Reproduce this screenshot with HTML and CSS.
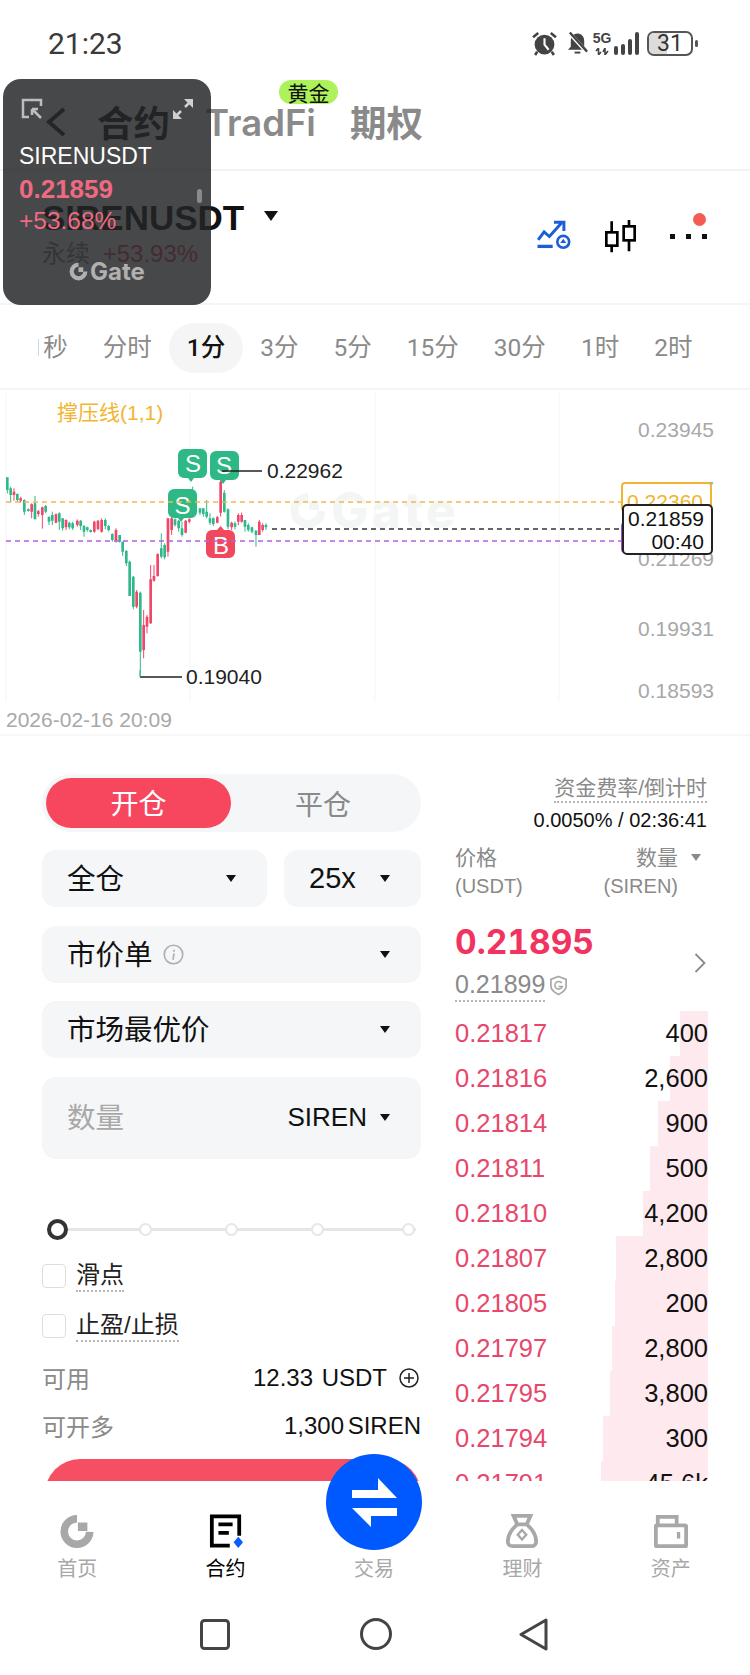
FILE: index.html
```html
<!DOCTYPE html>
<html lang="zh-CN">
  <head>
    <meta charset="UTF-8" />
    <meta name="viewport" content="width=device-width, initial-scale=1.0" />
    <title>SIRENUSDT 合约</title>
    <link rel="stylesheet" href="styles.css">
  </head>
  <body>
    <div class="page">
      <div class="statusbar">
        <span class="clock">21:23</span>
        <div class="status-icons">
          <svg class="ic-alarm" viewBox="0 0 24 24" width="25" height="25">
            <circle cx="12" cy="13" r="9.500" fill="#444" />
            <path d="M12 7v6l4 5" fill="none" stroke="#fff" stroke-width="2" />
            <path d="M1 6l5-4M23 6l-5-4M5 20l-2 3M19 20l2 3" fill="none" stroke="#444" stroke-width="2.500" />
          </svg>
          <svg class="ic-bell" viewBox="0 0 24 24" width="23" height="24">
            <path d="M12 2c-5 0-7 4-7 8v6l-3 3h20l-3-3v-6c0-4-2-8-7-8z" fill="#444" />
            <path d="M9 21h6v2H9z" fill="#444" />
            <path d="M3 1l19 21" stroke="#fff" stroke-width="4" />
            <path d="M4 1l18 20" stroke="#444" stroke-width="2.500" />
          </svg>
          <div class="net">
            <span class="net-label">5G</span>
            <svg viewBox="0 0 15 7" width="15" height="7">
              <path d="M3.500 0v7M10 0v7M1 3l2.500-3M6 4l-2.500 3M8 4l2-4M13 3l-3 4" fill="none" stroke="#444" stroke-width="1.600" />
            </svg>
          </div>
          <div class="signal">
            <i class="bar-a"></i><i class="bar-b"></i><i class="bar-c"></i><i class="bar-d"></i>
          </div>
          <div class="battery">
            <span class="battery-level"></span>
            <span class="battery-num">31</span>
          </div>
          <span class="battery-nub"></span>
        </div>
      </div>

      <div class="topnav">
        <svg class="back" viewBox="0 0 22 30" width="22" height="30">
          <path d="M19 2L4 15l15 13" fill="none" stroke="#2a2a2a" stroke-width="4" />
        </svg>
        <span class="topnav-item active">合约</span>
        <span class="topnav-item tradfi">TradFi<em class="gold">黄金</em></span>
        <span class="topnav-item">期权</span>
      </div>

      <div class="pair">
        <div class="pair-info">
          <div class="pair-name">SIRENUSDT <span class="caret caret-big"></span></div>
          <div class="pair-sub">永续 <span class="pair-change">+53.93%</span></div>
        </div>
        <div class="pair-tools">
          <svg viewBox="75 90 120 100" width="40" height="33">
            <path d="M84 150l18-24 16 14 36-40M132 97h30v26" fill="none" stroke="#1a5fd8" stroke-width="9" />
            <path d="M82 170h46" stroke="#1a5fd8" stroke-width="10" />
            <circle cx="160" cy="156" r="18" fill="none" stroke="#1a5fd8" stroke-width="8" />
            <path d="M160 147l9 13h-18z" fill="#1a5fd8" />
          </svg>
          <svg viewBox="280 85 105 105" width="35" height="35">
            <path d="M306 92v93M358 88v94" stroke="#000" stroke-width="8" />
            <rect x="290" y="125" width="33" height="40" fill="#fff" stroke="#000" stroke-width="8" />
            <rect x="342" y="107" width="33" height="42" fill="#fff" stroke="#000" stroke-width="8" />
          </svg>
          <div class="more">
            <i></i><i></i><i></i>
            <span class="more-dot"></span>
          </div>
        </div>
      </div>

      <div class="intervals">
        <span class="interval first">1秒</span>
        <span class="interval">分时</span>
        <span class="interval selected">1分</span>
        <span class="interval">3分</span>
        <span class="interval">5分</span>
        <span class="interval">15分</span>
        <span class="interval">30分</span>
        <span class="interval">1时</span>
        <span class="interval">2时</span>
      </div>

      <div class="chart">
        <div class="watermark">
          <svg viewBox="0 0 36 36" width="36" height="36">
            <path d="M18 5a13.500 13.500 0 1 0 13.500 14" fill="none" stroke="#f4f5f5" stroke-width="8" />
            <rect x="19" y="9" width="10" height="9" fill="#f4f5f5" />
          </svg>
          <span>Gate</span>
        </div>
        <svg class="chart-svg" viewBox="0 0 750 345" width="750" height="345">
          <path d="M6 3v309M190 3v309M375 3v309M559 3v309" stroke="#f5f5f5" stroke-width="1" />
          <g transform="translate(0 80) scale(0.3333)">
            <path fill="none" stroke="#2fb98a" stroke-width="3" d="M22 22V70M32 50V98M52 70V95M73 88V135M85 115V125M105 78V148M137 105V130M147 140V165M157 125V165M178 127V180M188 145V182M208 155V178M218 155V180M242 150V180M252 165V200M262 170V185M272 178V188M316 145V178M326 165V185M337 190V215M359 195V218M368 215V258M379 240V288M389 272V378M400 318V418M421 365V620M484 190V265M494 220V268M525 145V170M536 150V185M546 155V200M578 50V75M600 115V135M610 115V140M620 90V145M630 130V165M640 142V168M673 60V128M684 115V178M705 155V178M735 150V185M745 160V185M756 170V190M768 180V230M798 160V180" />
            <path fill="none" stroke="#2fb98a" stroke-width="8" d="M22 22V60M32 55V75M52 72V90M73 90V125M85 118V123M105 100V148M137 108V125M147 140V155M157 135V152M178 130V155M188 145V175M208 158V172M218 160V175M242 152V168M252 168V185M262 172V180M272 180V186M316 150V168M326 168V180M337 192V210M359 195V215M368 215V245M379 243V280M389 275V378M400 320V410M421 368V545M484 235V260M494 225V262M525 148V165M536 152V175M546 175V195M600 115V128M610 115V132M620 125V140M630 145V158M640 145V162M673 68V125M684 118V170M705 160V170M735 150V170M745 165V180M756 172V185M768 182V195M798 165V172" />
            <path fill="none" stroke="#f0466a" stroke-width="3" d="M42 55V92M62 80V98M95 100V145M115 120V140M127 110V176M168 130V160M198 148V180M232 148V170M283 152V188M294 150V180M305 145V188M348 175V218M410 360V415M431 420V565M441 435V490M452 285V462M462 285V335M473 250V320M504 145V260M515 120V195M557 150V190M568 145V160M652 138V160M662 30V140M695 155V180M715 130V165M725 128V158M778 150V195M788 160V185" />
            <path fill="none" stroke="#f0466a" stroke-width="8" d="M42 65V75M62 85V92M95 103V125M115 124V132M127 112V135M168 133V158M198 150V172M232 152V165M283 155V185M294 152V178M305 150V185M348 180V212M410 365V410M431 465V540M441 440V470M452 328V460M462 318V332M473 252V318M504 145V245M515 145V180M557 152V188M568 148V155M652 142V158M662 35V128M695 158V172M715 135V155M725 135V155M778 155V195M788 165V180" />
          </g>
          <g class="marker-sell">
            <path d="M184 59h17a6 6 0 0 1 6 6v17a6 6 0 0 1-6 6h-7l-3 4-3-4h-4a6 6 0 0 1-6-6v-17a6 6 0 0 1 6-6z" />
            <path d="M216 61h17a6 6 0 0 1 6 6v17a6 6 0 0 1-6 6h-7l-3 4-3-4h-4a6 6 0 0 1-6-6v-17a6 6 0 0 1 6-6z" />
            <path d="M174 99h17a6 6 0 0 1 6 6v17a6 6 0 0 1-6 6h-7l-3 4-3-4h-4a6 6 0 0 1-6-6v-17a6 6 0 0 1 6-6z" />
          </g>
          <text x="193" y="82" class="marker-text">S</text>
          <text x="224" y="84" class="marker-text">S</text>
          <text x="182.500" y="124" class="marker-text">S</text>
          <path class="marker-buy" d="M212 140h5l3.500-4 3.500 4h5a6 6 0 0 1 6 6v16a6 6 0 0 1-6 6h-17a6 6 0 0 1-6-6v-16a6 6 0 0 1 6-6z" />
          <text x="221" y="164" class="marker-text">B</text>
          <path d="M6 112H621" stroke="#f2b84a" stroke-width="1.700" stroke-dasharray="5 4" />
          <path d="M6 151H621" stroke="#b760e0" stroke-width="1.700" stroke-dasharray="5 4" />
          <path d="M272 139H622" stroke="#333" stroke-width="1.700" stroke-dasharray="5 4" />
          <path d="M222 81H262M140 287H182" stroke="#222" stroke-width="1.500" />
          <path d="M140 280V287" stroke="#2fb98a" stroke-width="1" />
        </svg>
        <span class="indicator">撑压线(1,1)</span>
        <span class="peak peak-high">0.22962</span>
        <span class="peak peak-low">0.19040</span>
        <span class="axis axis-a">0.23945</span>
        <span class="axis axis-b">0.22607</span>
        <span class="axis axis-c">0.21269</span>
        <span class="axis axis-d">0.19931</span>
        <span class="axis axis-e">0.18593</span>
        <span class="tag-yellow">0.22360</span>
        <span class="tag-purple"></span>
        <div class="tag-last">0.21859<br />00:40</div>
        <span class="chart-date">2026-02-16 20:09</span>
      </div>

      <div class="trade">
        <div class="form">
          <div class="switch">
            <span class="switch-on">开仓</span>
            <span class="switch-off">平仓</span>
          </div>
          <div class="form-row">
            <div class="field grow"><span class="cn">全仓</span><span class="caret"></span></div>
            <div class="field lever">25x<span class="caret"></span></div>
          </div>
          <div class="field">
            <span class="field-label"><span class="cn">市价单</span>
              <svg viewBox="0 0 20 20" width="21" height="21">
                <circle cx="10" cy="10" r="8.800" fill="none" stroke="#b0b0b0" stroke-width="1.600" />
                <path d="M10.500 5.500v1.800M10.500 9l-1 6" stroke="#b0b0b0" stroke-width="1.600" fill="none" />
              </svg>
            </span>
            <span class="caret"></span>
          </div>
          <div class="field"><span class="cn">市场最优价</span><span class="caret"></span></div>
          <div class="field amount">
            <span class="cn placeholder">数量</span>
            <span class="unit">SIREN<span class="caret"></span></span>
          </div>

          <div class="slider">
            <i class="knob"></i><i></i><i></i><i></i><i class="slider-end"></i>
          </div>

          <div class="check"><span class="box"></span><span class="check-label">滑点</span></div>
          <div class="check"><span class="box"></span><span class="check-label">止盈/止损</span></div>

          <div class="info first-info">
            <span class="info-key">可用</span>
            <span class="info-val">12.33 USDT
              <svg viewBox="0 0 20 20" width="20" height="20">
                <circle cx="10" cy="10" r="9" fill="none" stroke="#222" stroke-width="1.500" />
                <path d="M5 10h10M10 5v10" stroke="#222" stroke-width="1.500" />
              </svg>
            </span>
          </div>
          <div class="info">
            <span class="info-key">可开多</span>
            <span class="info-val tight">1,300 SIREN</span>
          </div>
          <div class="open-btn"></div>
        </div>

        <div class="book">
          <div class="funding">
            <span class="funding-label">资金费率/倒计时</span>
            <div class="funding-val">0.0050% / 02:36:41</div>
          </div>
          <div class="book-head">
            <div>价格<br /><small>(USDT)</small></div>
            <div class="book-head-right">
              <div>数量<br /><small>(SIREN)</small></div>
              <span class="caret caret-gray"></span>
            </div>
          </div>
          <div class="last">
            <div>
              <div class="last-price">0.21895</div>
              <div class="mark">
                <span class="mark-price">0.21899</span>
                <svg viewBox="0 0 20 22" width="19" height="21">
                  <path d="M10 1.500l8 3v7c0 4-4 7-8 9-4-2-8-5-8-9v-7z" fill="none" stroke="#a8a8a8" stroke-width="1.800" />
                  <path d="M13.500 8.500a4 4 0 1 0 .5 3.500h-4" fill="none" stroke="#a8a8a8" stroke-width="1.600" />
                </svg>
              </div>
            </div>
            <svg viewBox="0 0 12 20" width="12" height="20">
              <path d="M1.500 1l9 9-9 9" fill="none" stroke="#8a8a8a" stroke-width="1.800" />
            </svg>
          </div>
          <div class="asks">
            <div class="ask"><i class="depth" style="width: 28px"></i><span class="ask-price">0.21817</span><span class="ask-qty">400</span></div>
            <div class="ask"><i class="depth" style="width: 38px"></i><span class="ask-price">0.21816</span><span class="ask-qty">2,600</span></div>
            <div class="ask"><i class="depth" style="width: 50px"></i><span class="ask-price">0.21814</span><span class="ask-qty">900</span></div>
            <div class="ask"><i class="depth" style="width: 58px"></i><span class="ask-price">0.21811</span><span class="ask-qty">500</span></div>
            <div class="ask"><i class="depth" style="width: 65px"></i><span class="ask-price">0.21810</span><span class="ask-qty">4,200</span></div>
            <div class="ask"><i class="depth" style="width: 92px"></i><span class="ask-price">0.21807</span><span class="ask-qty">2,800</span></div>
            <div class="ask"><i class="depth" style="width: 93px"></i><span class="ask-price">0.21805</span><span class="ask-qty">200</span></div>
            <div class="ask"><i class="depth" style="width: 96px"></i><span class="ask-price">0.21797</span><span class="ask-qty">2,800</span></div>
            <div class="ask"><i class="depth" style="width: 98px"></i><span class="ask-price">0.21795</span><span class="ask-qty">3,800</span></div>
            <div class="ask"><i class="depth" style="width: 105px"></i><span class="ask-price">0.21794</span><span class="ask-qty">300</span></div>
            <div class="ask"><i class="depth" style="width: 107px"></i><span class="ask-price">0.21791</span><span class="ask-qty">45.6k</span></div>
          </div>
        </div>
      </div>

      <div class="tabbar">
        <div class="tab">
          <svg viewBox="0 0 36 36" width="36" height="34">
            <path d="M18 5a13.500 13.500 0 1 0 13.500 14" fill="none" stroke="#a8a8a8" stroke-width="8" />
            <rect x="19" y="9" width="10" height="9" fill="#a8a8a8" />
          </svg>
          <span>首页</span>
        </div>
        <div class="tab tab-active">
          <svg viewBox="0 0 36 36" width="36" height="34">
            <path d="M22 33.500H3V2.500H32V23" fill="none" stroke="#000" stroke-width="4" />
            <path d="M10 11H25M10 20H21" stroke="#000" stroke-width="4" />
            <path d="M31 24l5 6-5 6-5-6z" fill="#0a5cff" />
          </svg>
          <span>合约</span>
        </div>
        <div class="tab">
          <svg viewBox="0 0 36 36" width="36" height="34"></svg>
          <span>交易</span>
        </div>
        <div class="tab">
          <svg viewBox="0 0 36 36" width="36" height="34">
            <path d="M9 2H27L23 11H13Z" fill="none" stroke="#a8a8a8" stroke-width="4" />
            <path d="M13 11C6 17 3 24 3 29C3 32 5 34 8 34H28C31 34 33 32 33 29C33 24 30 17 23 11" fill="none" stroke="#a8a8a8" stroke-width="4" />
            <path d="M18 17L22.500 22L18 27L13.500 22Z" fill="none" stroke="#a8a8a8" stroke-width="2.500" />
          </svg>
          <span>理财</span>
        </div>
        <div class="tab">
          <svg viewBox="0 0 36 36" width="36" height="34">
            <path d="M4 12V3H24V12" fill="none" stroke="#a8a8a8" stroke-width="4" />
            <rect x="2" y="12" width="32" height="22" rx="1" fill="none" stroke="#a8a8a8" stroke-width="4" />
            <path d="M26 19v7" stroke="#a8a8a8" stroke-width="3.500" />
          </svg>
          <span>资产</span>
        </div>
      </div>

      <div class="sysnav">
        <svg viewBox="0 0 30 31" width="30" height="31">
          <rect x="1.500" y="1.500" width="27" height="28" rx="3" fill="none" stroke="#444" stroke-width="3" />
        </svg>
        <svg viewBox="0 0 32 32" width="32" height="32">
          <circle cx="16" cy="16" r="14.500" fill="none" stroke="#444" stroke-width="3" />
        </svg>
        <svg class="sys-back" viewBox="0 0 29 33" width="29" height="33">
          <path d="M27 2L2 16.500L27 31Z" fill="none" stroke="#444" stroke-width="3" stroke-linejoin="round" />
        </svg>
      </div>

      <div class="swap">
        <svg viewBox="0 0 96 96" width="96" height="96">
          <path d="M26 36H52V24L71 44H26ZM71 54V62H45V73L26 54Z" fill="#fff" />
        </svg>
      </div>

      <div class="floating">
        <div class="floating-icons">
          <svg viewBox="0 0 22 22" width="22" height="22">
            <path d="M20 8V2H2V19H8" fill="none" stroke="#bdbdbd" stroke-width="2.500" />
            <path d="M20 20L11 11M11 11h6M11 11v6" fill="none" stroke="#bdbdbd" stroke-width="2.500" />
          </svg>
          <svg viewBox="0 0 22 22" width="22" height="22">
            <path d="M2 20L9 13M20 2L13 9" stroke="#d0d0d0" stroke-width="2.500" />
            <path d="M1 12v9h9zM21 10V1h-9z" fill="#d0d0d0" />
          </svg>
        </div>
        <div class="floating-name">SIRENUSDT</div>
        <div class="floating-price">0.21859</div>
        <div class="floating-change">+53.68%</div>
        <div class="floating-logo">
          <svg viewBox="0 0 20 20" width="21" height="21">
            <path d="M10 3.500a6.500 6.500 0 1 0 6.500 6.500" fill="none" stroke="#b0b0b0" stroke-width="4" />
            <rect x="10" y="6" width="4.500" height="4.500" fill="#b0b0b0" />
          </svg>
          <span>Gate</span>
        </div>
        <span class="floating-handle"></span>
      </div>
    </div>
  </body>
</html>
```

FILE: styles.css
```css
body {
  margin: 0;
  background: #fff;
  font-family: "Liberation Sans", "Noto Sans CJK SC", sans-serif;
  color: #111;
}

.page {
  position: relative;
  display: flex;
  flex-direction: column;
  width: 750px;
  height: 1675px;
  overflow: hidden;
}

svg {
  display: block;
  flex: none;
}

/* status bar */
.statusbar {
  display: flex;
  align-items: center;
  justify-content: space-between;
  height: 80px;
  padding: 6px 52px 0 48px;
  box-sizing: border-box;
}
.clock {
  font-family: Roboto, sans-serif;
  font-size: 30px;
  color: #3a3a3a;
}
.status-icons {
  display: flex;
  align-items: center;
}
.ic-bell {
  margin-left: 9px;
}
.net {
  display: flex;
  flex-direction: column;
  align-items: center;
  margin-left: 4px;
}
.net-label {
  font-size: 14px;
  font-weight: bold;
  line-height: 15px;
  color: #444;
  margin-bottom: 2px;
}
.signal {
  display: flex;
  align-items: flex-end;
  gap: 2.500px;
  height: 23px;
  margin-left: 2px;
}
.signal i {
  display: block;
  width: 4.500px;
  border-radius: 2px;
  background: #444;
}
.bar-a {
  height: 9px;
}
.bar-b {
  height: 11px;
}
.bar-c {
  height: 16px;
}
.bar-d {
  height: 23px;
}
.battery {
  position: relative;
  width: 46px;
  height: 25px;
  margin-left: 8px;
  border: 2px solid #555;
  border-radius: 7px;
  box-sizing: border-box;
  overflow: hidden;
  text-align: center;
}
.battery-level {
  position: absolute;
  left: 0;
  top: 0;
  bottom: 0;
  width: 18px;
  background: #dcdcdc;
}
.battery-num {
  position: relative;
  font-family: Roboto, sans-serif;
  font-size: 23px;
  line-height: 21px;
  color: #333;
}
.battery-nub {
  width: 3px;
  height: 7px;
  margin-left: 2px;
  border-radius: 2px;
  background: #555;
}

/* top navigation */
.topnav {
  display: flex;
  align-items: center;
  height: 91px;
  padding: 0 0 6px 45px;
  border-bottom: 2px solid #f3f3f3;
  box-sizing: border-box;
}
.back {
  margin-right: 30px;
}
.topnav-item {
  font-family: Inter, "Noto Sans CJK SC", sans-serif;
  font-size: 36.500px;
  font-weight: 600;
  color: #8a8a8a;
  margin-right: 34px;
}
.topnav-item.active {
  color: #1c1c1c;
  margin-right: 35px;
}
.tradfi {
  position: relative;
  padding-top: 2px;
}
.gold {
  position: absolute;
  left: 74px;
  top: -19px;
  width: 59px;
  height: 24px;
  border-radius: 12px;
  background: #adf25a;
  color: #111;
  font-family: "Noto Sans CJK SC", sans-serif;
  font-size: 21px;
  font-style: normal;
  font-weight: normal;
  line-height: 24px;
  text-align: center;
}

/* pair header */
.pair {
  display: flex;
  justify-content: space-between;
  height: 134px;
  padding: 26px 43px 0 42px;
  border-bottom: 2px solid #f5f5f5;
  box-sizing: border-box;
}
.pair-name {
  display: flex;
  align-items: center;
  font-size: 35px;
  font-weight: bold;
  line-height: 42px;
  color: #111;
}
.caret {
  display: inline-block;
  width: 0;
  height: 0;
  border-left: 5.500px solid transparent;
  border-right: 5.500px solid transparent;
  border-top: 7px solid #111;
}
.caret-big {
  margin-left: 20px;
  margin-top: -4px;
  border-left-width: 7px;
  border-right-width: 7px;
  border-top-width: 10px;
}
.pair-sub {
  font-size: 24px;
  line-height: 30px;
  color: #8a8a8a;
}
.pair-change {
  margin-left: 6px;
  color: #f0466a;
}
.pair-tools {
  display: flex;
  align-items: center;
  gap: 28px;
  height: 74px;
  margin-top: 2px;
}
.more {
  position: relative;
  display: flex;
  gap: 11px;
  margin-left: 4px;
}
.more i {
  width: 5px;
  height: 5px;
  background: #111;
}
.more-dot {
  position: absolute;
  right: 1px;
  top: -21px;
  width: 13px;
  height: 13px;
  border-radius: 50%;
  background: #f25c54;
}

/* intervals */
.intervals {
  display: flex;
  align-items: center;
  height: 85px;
  padding: 3px 0 0 12px;
  border-bottom: 2px solid #f5f5f5;
  box-sizing: border-box;
  overflow: hidden;
}
.interval {
  flex: none;
  padding: 0 17.500px;
  font-size: 24.500px;
  line-height: 50px;
  color: #8a8a8a;
  font-family: Roboto, "Noto Sans CJK SC", sans-serif;
}
.interval.first {
  clip-path: inset(0 0 0 26px);
}
.interval.selected {
  border-radius: 25px;
  background: #f5f5f5;
  color: #111;
  font-weight: 500;
}

/* chart, everything here is placed on the canvas */
.chart {
  position: relative;
  flex: none;
  height: 346px;
  border-bottom: 2px solid #f7f7f7;
  box-sizing: border-box;
}
.chart-svg {
  position: absolute;
  left: 0;
  top: 0;
}
.watermark {
  position: absolute;
  left: 290px;
  top: 102px;
  display: flex;
  align-items: center;
  gap: 5px;
  font-family: Inter, sans-serif;
  font-size: 50px;
  font-weight: 800;
  line-height: 36px;
  letter-spacing: 3px;
  color: #f4f5f5;
}
.marker-sell path {
  fill: #2eb886;
}
.marker-buy {
  fill: #f0485f;
}
.marker-text {
  fill: #fff;
  font-size: 24px;
  text-anchor: middle;
}
.indicator {
  position: absolute;
  left: 57px;
  top: 10px;
  font-size: 21px;
  line-height: 26px;
  color: #f2b531;
}
.peak {
  position: absolute;
  font-size: 21px;
  line-height: 24px;
  color: #222;
}
.peak-high {
  left: 267px;
  top: 69px;
}
.peak-low {
  left: 186px;
  top: 275px;
}
.axis {
  position: absolute;
  right: 36px;
  font-size: 21px;
  line-height: 24px;
  color: #a8a8a8;
}
.axis-a {
  top: 28px;
}
.axis-b {
  top: 87px;
}
.axis-c {
  top: 157px;
}
.axis-d {
  top: 227px;
}
.axis-e {
  top: 289px;
}
.tag-yellow {
  position: absolute;
  left: 621px;
  top: 92px;
  width: 91px;
  height: 30px;
  padding-right: 7px;
  border: 2px solid #f2b531;
  border-radius: 4px;
  box-sizing: border-box;
  background: #fff;
  font-size: 21px;
  line-height: 36px;
  color: #f0b52e;
  text-align: right;
}
.tag-purple {
  position: absolute;
  left: 621px;
  top: 132px;
  width: 10px;
  height: 31px;
  border-left: 2px solid #a050d8;
  border-radius: 4px 0 0 4px;
  box-sizing: border-box;
}
.tag-last {
  position: absolute;
  left: 622px;
  top: 114px;
  width: 91px;
  height: 51px;
  padding: 1px 7px 0 0;
  border: 2px solid #222;
  border-radius: 5px;
  box-sizing: border-box;
  background: #fff;
  font-size: 21px;
  line-height: 23px;
  color: #111;
  text-align: right;
}
.chart-date {
  position: absolute;
  left: 6px;
  top: 318px;
  font-size: 21px;
  line-height: 24px;
  color: #a8a8a8;
}

/* order form */
.trade {
  display: flex;
  flex: none;
  height: 745px;
  overflow: hidden;
}
.form {
  flex: none;
  width: 379px;
  margin-left: 42px;
  padding-top: 38px;
}
.switch {
  display: flex;
  align-items: center;
  height: 58px;
  padding-left: 4px;
  border-radius: 29px;
  background: #f5f6f7;
  font-size: 28px;
  text-align: center;
}
.switch-on {
  width: 185px;
  height: 50px;
  border-radius: 25px;
  background: #f7475f;
  color: #fff;
  line-height: 53px;
}
.switch-off {
  flex: 1;
  padding-right: 6px;
  color: #8a8a8a;
}
.form-row {
  display: flex;
  gap: 17px;
  margin-top: 18px;
}
.field {
  display: flex;
  align-items: center;
  justify-content: space-between;
  height: 57px;
  padding: 0 31px 0 25px;
  border-radius: 14px;
  background: #f5f6f7;
  font-size: 28.500px;
  color: #111;
}
.form > .field {
  margin-top: 18.500px;
}
.form-row .field {
  margin-top: 0;
}
.cn {
  margin-bottom: 4px;
}
.grow {
  flex: 1;
}
.lever {
  width: 137px;
  box-sizing: border-box;
  font-size: 29px;
}
.field-label {
  display: flex;
  align-items: center;
  gap: 10px;
}
.form > .amount {
  height: 82px;
}
.placeholder {
  color: #a8a8a8;
}
.unit {
  display: flex;
  align-items: center;
  gap: 13px;
  font-size: 26px;
}
.slider {
  display: flex;
  align-items: center;
  gap: 73px;
  width: 369px;
  height: 20px;
  margin: 61px 0 0 5px;
  background: linear-gradient(#e6e6e6, #e6e6e6) center / 100% 3px no-repeat;
}
.slider i {
  flex: none;
  width: 13px;
  height: 13px;
  border: 2px solid #e6e6e6;
  border-radius: 50%;
  box-sizing: border-box;
  background: #fff;
}
.slider .knob {
  width: 21px;
  height: 21px;
  margin-right: -2.500px;
  border: 4px solid #333;
}
.slider .slider-end {
  margin-left: 5px;
}
.check {
  display: flex;
  align-items: flex-start;
  height: 24px;
  margin-top: 26px;
}
.slider + .check {
  margin-top: 24px;
}
.box {
  flex: none;
  width: 24px;
  height: 24px;
  border: 1.500px solid #dedede;
  border-radius: 4px;
  box-sizing: border-box;
}
.check-label {
  margin: -4px 0 0 10px;
  border-bottom: 2px dotted #b5b5b5;
  font-size: 24px;
  line-height: 30px;
  color: #222;
}
.info {
  display: flex;
  align-items: center;
  justify-content: space-between;
  height: 30px;
  margin-top: 18px;
}
.first-info {
  margin-top: 25px;
}
.info-key {
  font-size: 24px;
  color: #8a8a8a;
}
.info-val {
  display: flex;
  align-items: center;
  gap: 12px;
  font-size: 24px;
  word-spacing: 2px;
  color: #111;
}
.info-val.tight {
  word-spacing: -3px;
}
.first-info .info-val {
  margin-right: 2px;
}
.open-btn {
  height: 70px;
  margin: 18px 0 0 3px;
  border-radius: 35px;
  background: #f64f63;
}

/* order book */
.book {
  flex: none;
  width: 253px;
  margin-left: 34px;
  padding-top: 38px;
}
.funding {
  text-align: right;
  padding-right: 1px;
}
.funding-label {
  display: inline-block;
  border-bottom: 2px dotted #b5b5b5;
  font-size: 21px;
  line-height: 27px;
  color: #8a8a8a;
}
.funding-val {
  margin-top: 4px;
  font-size: 20px;
  line-height: 26px;
  color: #111;
}
.book-head {
  display: flex;
  justify-content: space-between;
  margin-top: 11px;
  font-size: 21px;
  line-height: 28px;
  color: #8a8a8a;
}
.book-head small {
  font-size: 20px;
}
.book-head-right {
  display: flex;
  align-items: flex-start;
  gap: 13px;
  text-align: right;
  padding-right: 7px;
}
.caret-gray {
  margin-top: 10px;
  border-left-width: 5px;
  border-right-width: 5px;
  border-top-width: 7px;
  border-top-color: #8a8a8a;
}
.last {
  display: flex;
  align-items: center;
  justify-content: space-between;
  margin-top: 23px;
  padding-right: 2px;
}
.last-price {
  font-family: Inter, sans-serif;
  font-size: 33.500px;
  font-weight: 700;
  line-height: 38px;
  color: #f0345f;
  font-variant-numeric: tabular-nums;
}
.mark {
  display: flex;
  align-items: center;
  gap: 4px;
  margin-top: 8px;
}
.mark-price {
  border-bottom: 2px dotted #b5b5b5;
  font-size: 25px;
  line-height: 31px;
  color: #8a8a8a;
}
.asks {
  margin-top: 9px;
}
.ask {
  position: relative;
  display: flex;
  align-items: center;
  justify-content: space-between;
  height: 45px;
  font-size: 25.500px;
}
.depth {
  position: absolute;
  right: 0;
  top: 0;
  bottom: 0;
  background: #feeaee;
}
.ask-price {
  position: relative;
  color: #e8476c;
}
.ask-qty {
  position: relative;
  color: #111;
}

/* bottom tabs */
.tabbar {
  display: flex;
  flex: none;
  height: 119px;
  padding: 33px 5px 0 3px;
  box-sizing: border-box;
  background: #fff;
}
.tab {
  display: flex;
  flex: 1;
  flex-direction: column;
  align-items: center;
  font-size: 20px;
  line-height: 24px;
  color: #a8a8a8;
}
.tab span {
  margin-top: 9px;
}
.tab-active {
  color: #000;
}

/* system navigation */
.sysnav {
  display: flex;
  align-items: center;
  gap: 130px;
  flex: none;
  height: 75px;
  padding: 0 0 7px 200px;
  box-sizing: border-box;
}
.sys-back {
  margin-left: -3px;
}

/* floating over the page */
.swap {
  position: absolute;
  left: 326px;
  top: 1454px;
  width: 96px;
  height: 96px;
  border-radius: 50%;
  background: #0059ff;
}
.floating {
  position: absolute;
  left: 3px;
  top: 79px;
  width: 208px;
  height: 226px;
  padding: 19px 17px 0 16px;
  border-radius: 18px;
  box-sizing: border-box;
  background: rgba(36, 37, 39, 0.84);
}
.floating-icons {
  display: flex;
  justify-content: space-between;
  padding: 0 0 0 2px;
}
.floating-name {
  margin-top: 21px;
  font-size: 23px;
  line-height: 30px;
  color: #fff;
}
.floating-price {
  margin-top: 2px;
  font-size: 26px;
  font-weight: bold;
  line-height: 32px;
  color: #ee6a80;
}
.floating-change {
  font-size: 24.500px;
  line-height: 32px;
  color: #ee6a80;
}
.floating-logo {
  display: flex;
  align-items: center;
  justify-content: center;
  gap: 1px;
  margin-top: 24px;
  font-family: Inter, sans-serif;
  font-size: 24px;
  font-weight: 700;
  line-height: 20px;
  color: #b0b0b0;
}
.floating-handle {
  position: absolute;
  right: 9px;
  top: 110px;
  width: 5px;
  height: 14px;
  border-radius: 3px;
  background: #8a8a8a;
}
```
